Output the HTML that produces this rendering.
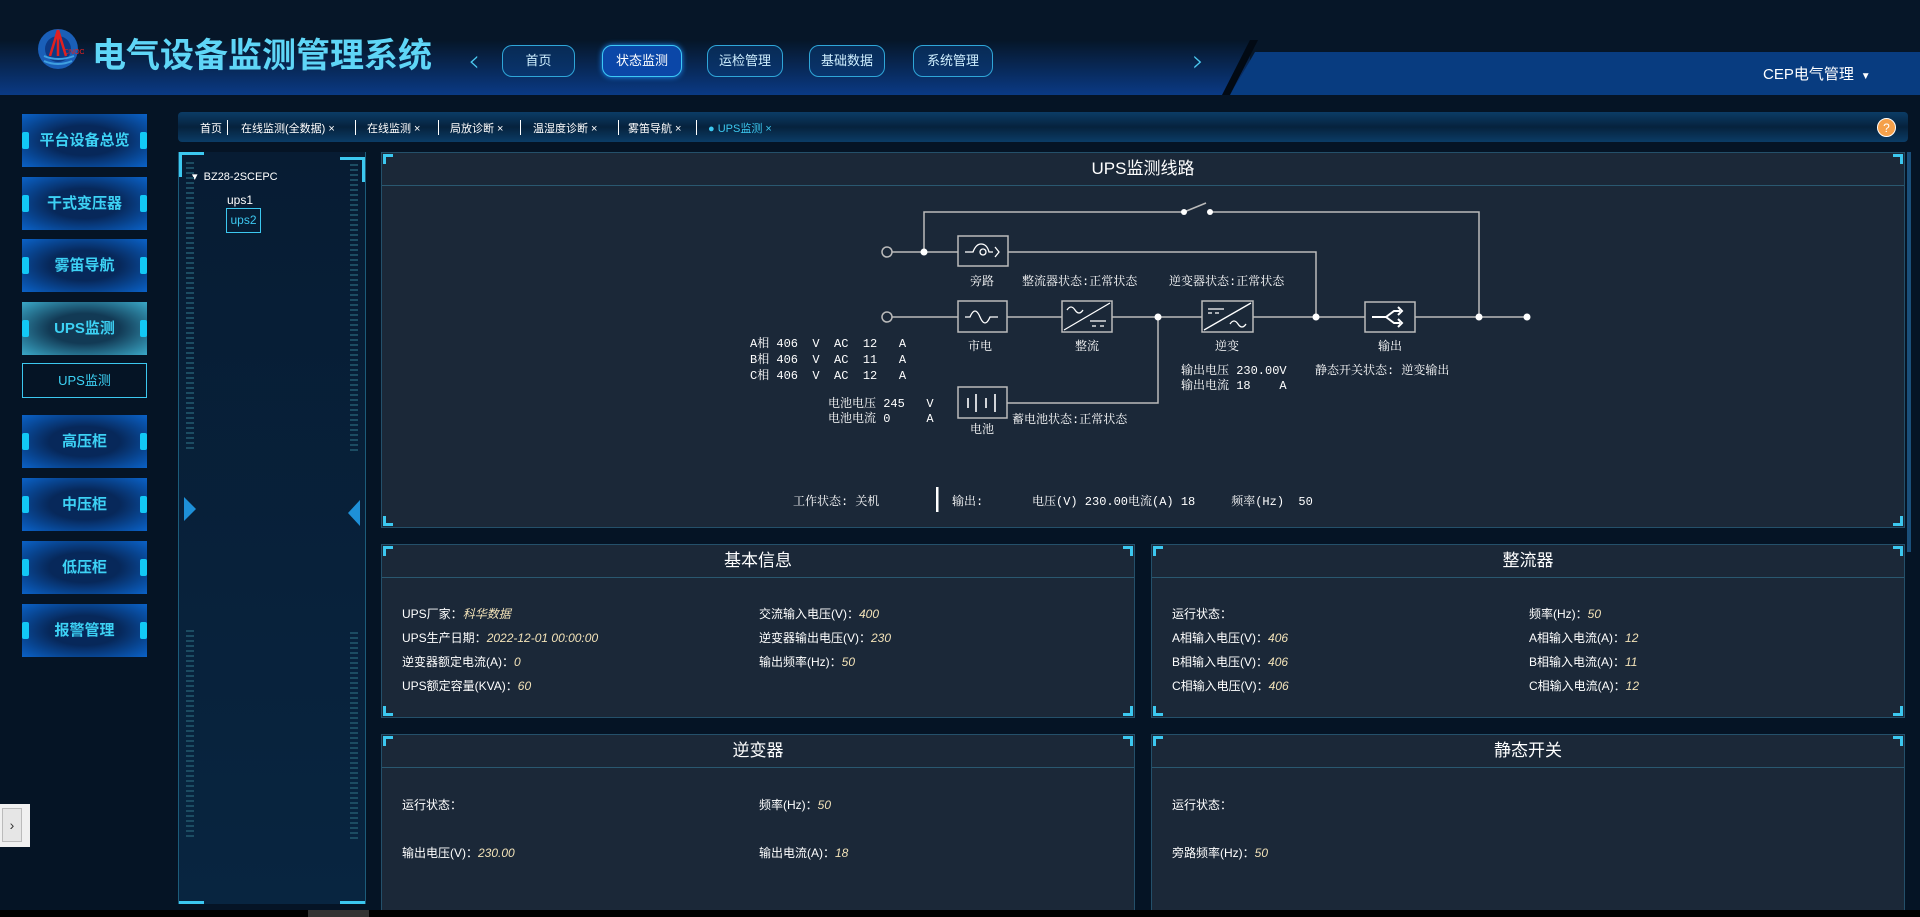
<!DOCTYPE html>
<html><head><meta charset="utf-8">
<style>
*{margin:0;padding:0;box-sizing:border-box}
body{width:1920px;height:917px;overflow:hidden;background:#051425;font-family:"Liberation Sans","Noto Sans CJK SC",sans-serif;position:relative;color:#fff}
.abs{position:absolute}
.hdr{left:0;top:0;width:1920px;height:95px;background:#061628}
.band{left:0;top:40px;width:1250px;height:55px;background:linear-gradient(180deg,rgba(10,50,110,0) 0%,#0a3a85 100%)}
.band2{left:1230px;top:52px;width:690px;height:43px;background:#083c80;clip-path:polygon(25px 0,100% 0,100% 100%,0 100%)}
.slash{left:1222px;top:40px;width:40px;height:55px;background:#020a14;clip-path:polygon(28px 0,36px 0,8px 100%,0 100%)}
.title{left:92px;top:28px;font-size:34px;font-weight:bold;color:#5fd6f7;letter-spacing:0px;font-family:"WenQuanYi Zen Hei","Noto Sans CJK SC",sans-serif}
.nav{top:45px;height:32px;border:1.5px solid #2fa6d8;border-radius:10px;color:#cfefff;font-size:13px;text-align:center;line-height:29px;background:rgba(10,60,120,.5)}
.nav.on{background:#0b47a8;border-color:#3cc8f5;color:#fff;box-shadow:0 0 6px #1a8cff}
.arr{top:44px;color:#4cc9f0;font-size:30px;font-weight:100;font-family:"DejaVu Sans",sans-serif}
.user{left:1763px;top:63px;font-size:15px;color:#fff}
.side{left:22px;width:125px;height:53px;background:radial-gradient(ellipse at center,#07285a 40%,#0a62c8 100%);color:#3dd2f5;font-size:15px;font-weight:bold;text-align:center;line-height:53px}
.side:before,.side:after{content:"";position:absolute;top:18px;width:7px;height:17px;background:#12c8f5;border-radius:2px}
.side:before{left:0}.side:after{right:0}
.side.on{background:radial-gradient(ellipse at center,#123a55 40%,#3aa8c8 100%)}
.tabs{left:178px;top:112px;width:1730px;height:30px;border-radius:4px;background:linear-gradient(180deg,#0b3c66,#06223d 50%,#0b3c66);font-size:11px;color:#fff}
.tabs span{position:absolute;top:8px}
.sep{position:absolute;top:8px;width:1px;height:15px;background:#fff}
.tree{left:178px;top:152px;width:188px;height:752px;background:linear-gradient(180deg,#071c33,#082540);border-left:1px solid #1c5c7a;border-right:1px solid #1c5c7a}
.pan{background:#1b2838;border:1px solid #24506a}
.pan .h{position:absolute;left:0;right:0;top:0;height:33px;border-bottom:1px solid #2a5870;text-align:center;font-size:17px;line-height:31px;color:#fff}
.c{position:absolute;width:10px;height:10px;border-color:#3cc8f0;border-style:solid;border-width:0}
.tl{left:1px;top:1px;border-top-width:3px;border-left-width:3px}
.tr{right:1px;top:1px;border-top-width:3px;border-right-width:3px}
.bl{left:1px;bottom:1px;border-bottom-width:3px;border-left-width:3px}
.br{right:1px;bottom:1px;border-bottom-width:3px;border-right-width:3px}
.kv{position:absolute;font-size:12px;color:#fff}
.kv i{color:#f2e2b8}
svg text{font-family:"Liberation Mono","Noto Serif CJK SC",serif;font-size:12px;fill:#fff}
</style></head><body>
<div class="abs hdr"></div>
<div class="abs band"></div>
<div class="abs band2"></div>
<div class="abs slash"></div>
<svg class="abs" style="left:36px;top:26px" width="48" height="46" viewBox="0 0 48 46">
<circle cx="22" cy="23" r="20" fill="#1a5fb8"/><circle cx="22" cy="23" r="13" fill="#0c3a86"/>
<path d="M8 30 Q22 36 38 30 M8 35 Q22 41 36 35" stroke="#3fa0e0" stroke-width="2" fill="none"/>
<path d="M22 4 L14 30 M22 4 L30 30 M22 4 V30" stroke="#e02020" stroke-width="2.5" fill="none"/>
<text x="28" y="28" style="font-size:7px;fill:#e02020;font-family:'Liberation Sans'">CNOOC</text></svg>
<div class="abs title">电气设备监测管理系统</div>
<div class="abs arr" style="left:468px">‹</div>
<div class="abs arr" style="left:1192px">›</div>
<div class="abs nav" style="left:502px;width:73px">首页</div>
<div class="abs nav on" style="left:602px;width:80px">状态监测</div>
<div class="abs nav" style="left:707px;width:76px">运检管理</div>
<div class="abs nav" style="left:809px;width:76px">基础数据</div>
<div class="abs nav" style="left:913px;width:80px">系统管理</div>
<div class="abs user">CEP电气管理 <span style="font-size:10px">&nbsp;▼</span></div>

<div class="abs side" style="top:114px">平台设备总览</div>
<div class="abs side" style="top:177px">干式变压器</div>
<div class="abs side" style="top:239px">雾笛导航</div>
<div class="abs side on" style="top:302px">UPS监测</div>
<div class="abs" style="left:22px;top:363px;width:125px;height:35px;border:1px solid #3cc8f0;color:#3dd2f5;font-size:13px;text-align:center;line-height:33px">UPS监测</div>
<div class="abs side" style="top:415px">高压柜</div>
<div class="abs side" style="top:478px">中压柜</div>
<div class="abs side" style="top:541px">低压柜</div>
<div class="abs side" style="top:604px">报警管理</div>
<div class="abs" style="left:0;top:804px;width:30px;height:43px;background:#f0f0f0"><div style="position:absolute;left:2px;top:4px;width:20px;height:34px;border:1px solid #bbb;background:#e6e6e6;color:#333;text-align:center;line-height:32px;font-size:14px">›</div></div>

<div class="abs tabs">
<span style="left:22px">首页</span><div class="sep" style="left:49px"></div>
<span style="left:63px">在线监测(全数据) ×</span><div class="sep" style="left:177px"></div>
<span style="left:189px">在线监测 ×</span><div class="sep" style="left:260px"></div>
<span style="left:272px">局放诊断 ×</span><div class="sep" style="left:342px"></div>
<span style="left:355px">温湿度诊断 ×</span><div class="sep" style="left:440px"></div>
<span style="left:450px">雾笛导航 ×</span><div class="sep" style="left:518px"></div>
<span style="left:530px;color:#3cc8f0">● UPS监测 ×</span>
<div style="position:absolute;right:12px;top:6px;width:19px;height:19px;border-radius:50%;background:#f5a04a;color:#fff;font-size:12px;text-align:center;line-height:19px;border:1px solid #fff">?</div>
</div>

<div class="abs tree">
<div style="position:absolute;left:13px;top:18px;font-size:11px;color:#fff">▾&nbsp; BZ28-2SCEPC</div>
<div style="position:absolute;left:48px;top:41px;font-size:12px;color:#fff">ups1</div>
<div style="position:absolute;left:47px;top:56px;width:35px;height:25px;border:1px solid #3cc8f0;font-size:12px;color:#3cc8f0;text-align:center;line-height:23px">ups2</div>
<div style="position:absolute;left:0;top:0;width:25px;height:3px;background:#3cc8f0"></div>
<div style="position:absolute;left:0;top:0;width:3px;height:25px;background:#3cc8f0"></div>
<div style="position:absolute;right:0;top:5px;width:25px;height:3px;background:#3cc8f0"></div>
<div style="position:absolute;right:0;top:5px;width:3px;height:25px;background:#3cc8f0"></div>
<div style="position:absolute;left:0;bottom:0;width:25px;height:3px;background:#3cc8f0"></div>
<div style="position:absolute;right:0;bottom:0;width:25px;height:3px;background:#3cc8f0"></div>
<div style="position:absolute;left:5px;top:345px;width:0;height:0;border-top:12px solid transparent;border-bottom:12px solid transparent;border-left:12px solid #1e90d8"></div>
<div style="position:absolute;right:5px;top:348px;width:0;height:0;border-top:13px solid transparent;border-bottom:13px solid transparent;border-right:12px solid #1e90d8"></div>
<div style="position:absolute;left:7px;top:10px;width:8px;height:290px;background:repeating-linear-gradient(180deg,#1c4c62 0 2px,transparent 2px 5px)"></div>
<div style="position:absolute;right:7px;top:12px;width:8px;height:290px;background:repeating-linear-gradient(180deg,#1c4c62 0 2px,transparent 2px 5px)"></div>
<div style="position:absolute;left:7px;top:478px;width:8px;height:210px;background:repeating-linear-gradient(180deg,#1c4c62 0 2px,transparent 2px 5px)"></div>
<div style="position:absolute;right:7px;top:480px;width:8px;height:210px;background:repeating-linear-gradient(180deg,#1c4c62 0 2px,transparent 2px 5px)"></div>
</div>

<div class="abs pan" style="left:381px;top:152px;width:1524px;height:376px">
<div class="h">UPS监测线路</div><div class="c tl"></div><div class="c tr"></div><div class="c bl"></div><div class="c br"></div>
</div>
<div class="abs" style="left:1907px;top:152px;width:4px;height:400px;background:#1a4f7a"></div>
<svg class="abs" style="left:0;top:0" width="1920" height="917">
<g stroke="#bbb" stroke-width="1.5" fill="none">
<path d="M924 252 V212 H1184 M1210 212 H1479 V317"/>
<path d="M1184 212 L1206 203"/>
<path d="M892 252 H958 M1008 252 H1316 V317"/>
<path d="M892 317 H958 M1007 317 H1062 M1112 317 H1202 M1253 317 H1365 M1415 317 H1527"/>
<path d="M1007 403 H1158 V317"/>
<circle cx="887" cy="252" r="5"/><circle cx="887" cy="317" r="5"/>
<rect x="958" y="236" width="50" height="30"/>
<rect x="958" y="301" width="49" height="31"/>
<rect x="1062" y="301" width="50" height="31"/>
<rect x="1202" y="301" width="51" height="31"/>
<rect x="1365" y="302" width="50" height="30"/>
<rect x="958" y="387" width="49" height="31"/>
</g>
<g stroke="#fff" stroke-width="1.3" fill="none">
<path d="M965 252 h8 q3 -8 8 -8 q6 0 8 8 h4 M995 247 l4 5 l-4 5"/><circle cx="983" cy="252" r="3"/>
<path d="M965 317 h5 q5 -12 10 0 q5 12 10 0 h8"/>
<path d="M1064 330 L1110 303 M1067 310 q4 -6 8 0 q4 6 8 0 M1090 321 h16 M1092 326 h4 M1100 326 h4"/>
<path d="M1204 330 L1251 303 M1208 309 h16 M1208 313 h4 M1215 313 h4 M1230 324 q4 -6 8 0 q4 6 8 0"/>
<path d="M1372 317 h14 l8 -6 h6 M1386 317 l8 6 h6 M1398 307 l4 4 l-4 4 M1398 319 l4 4 l-4 4" stroke-width="2"/>
<path d="M968 398 v10 M976 394 v18 M986 398 v10 M995 394 v18" stroke-width="1.6"/>
</g>
<g fill="#fff"><circle cx="924" cy="252" r="3.5"/><circle cx="1158" cy="317" r="3.5"/><circle cx="1316" cy="317" r="3.5"/><circle cx="1479" cy="317" r="3.5"/><circle cx="1527" cy="317" r="3.5"/><circle cx="1184" cy="212" r="3"/><circle cx="1210" cy="212" r="3"/></g>
<text x="970" y="285">旁路</text>
<text x="1022" y="285">整流器状态:正常状态</text>
<text x="1169" y="285">逆变器状态:正常状态</text>
<text x="968" y="350">市电</text><text x="1075" y="350">整流</text><text x="1215" y="350">逆变</text><text x="1378" y="350">输出</text>
<text x="750" y="347" xml:space="preserve">A相 406  V  AC  12   A</text>
<text x="750" y="363" xml:space="preserve">B相 406  V  AC  11   A</text>
<text x="750" y="379" xml:space="preserve">C相 406  V  AC  12   A</text>
<text x="828" y="407" xml:space="preserve">电池电压 245   V</text>
<text x="828" y="422" xml:space="preserve">电池电流 0     A</text>
<text x="970" y="433">电池</text>
<text x="1012" y="423">蓄电池状态:正常状态</text>
<text x="1181" y="374" xml:space="preserve">输出电压 230.00V</text>
<text x="1181" y="389" xml:space="preserve">输出电流 18    A</text>
<text x="1315" y="374" xml:space="preserve">静态开关状态: 逆变输出</text>
<text x="793" y="505" xml:space="preserve">工作状态: 关机</text>
<rect x="936" y="487" width="2.5" height="25" fill="#fff"/>
<text x="952" y="505">输出:</text>
<text x="1032" y="505" xml:space="preserve">电压(V) 230.00电流(A) 18     频率(Hz)  50</text>
</svg>

<div class="abs pan" style="left:381px;top:544px;width:754px;height:174px">
<div class="h">基本信息</div><div class="c tl"></div><div class="c tr"></div><div class="c bl"></div><div class="c br"></div>
<div class="kv" style="left:20px;top:60px">UPS厂家：<i>科华数据</i></div>
<div class="kv" style="left:20px;top:84px">UPS生产日期：<i>2022-12-01 00:00:00</i></div>
<div class="kv" style="left:20px;top:108px">逆变器额定电流(A)：<i>0</i></div>
<div class="kv" style="left:20px;top:132px">UPS额定容量(KVA)：<i>60</i></div>
<div class="kv" style="left:377px;top:60px">交流输入电压(V)：<i>400</i></div>
<div class="kv" style="left:377px;top:84px">逆变器输出电压(V)：<i>230</i></div>
<div class="kv" style="left:377px;top:108px">输出频率(Hz)：<i>50</i></div>
</div>
<div class="abs pan" style="left:1151px;top:544px;width:754px;height:174px">
<div class="h">整流器</div><div class="c tl"></div><div class="c tr"></div><div class="c bl"></div><div class="c br"></div>
<div class="kv" style="left:20px;top:60px">运行状态：</div>
<div class="kv" style="left:20px;top:84px">A相输入电压(V)：<i>406</i></div>
<div class="kv" style="left:20px;top:108px">B相输入电压(V)：<i>406</i></div>
<div class="kv" style="left:20px;top:132px">C相输入电压(V)：<i>406</i></div>
<div class="kv" style="left:377px;top:60px">频率(Hz)：<i>50</i></div>
<div class="kv" style="left:377px;top:84px">A相输入电流(A)：<i>12</i></div>
<div class="kv" style="left:377px;top:108px">B相输入电流(A)：<i>11</i></div>
<div class="kv" style="left:377px;top:132px">C相输入电流(A)：<i>12</i></div>
</div>
<div class="abs pan" style="left:381px;top:734px;width:754px;height:180px">
<div class="h">逆变器</div><div class="c tl"></div><div class="c tr"></div>
<div class="kv" style="left:20px;top:61px">运行状态：</div>
<div class="kv" style="left:20px;top:109px">输出电压(V)：<i>230.00</i></div>
<div class="kv" style="left:377px;top:61px">频率(Hz)：<i>50</i></div>
<div class="kv" style="left:377px;top:109px">输出电流(A)：<i>18</i></div>
</div>
<div class="abs pan" style="left:1151px;top:734px;width:754px;height:180px">
<div class="h">静态开关</div><div class="c tl"></div><div class="c tr"></div>
<div class="kv" style="left:20px;top:61px">运行状态：</div>
<div class="kv" style="left:20px;top:109px">旁路频率(Hz)：<i>50</i></div>
</div>
<div class="abs" style="left:0;top:910px;width:1920px;height:7px;background:#000"></div>
<div class="abs" style="left:308px;top:910px;width:61px;height:7px;background:#333"></div>
</body></html>
